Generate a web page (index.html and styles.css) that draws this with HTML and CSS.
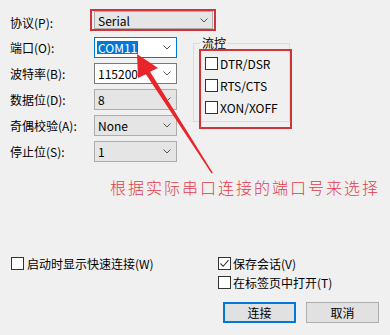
FILE: index.html
```html
<!DOCTYPE html>
<html lang="zh-CN">
<head>
<meta charset="utf-8">
<title>串口设置</title>
<link rel="stylesheet" href="styles.css">
</head>
<body>
<div class="dialog">
  <div class="proto">
    <span class="label proto-label">协议(P):</span>
    <div class="mark-box">
      <div class="combo combo-gray combo-serial"><span class="val">Serial</span><svg class="chev" viewBox="0 0 8 5" width="8" height="5"><polyline points="0.5,0.5 4,4 7.5,0.5"/></svg></div>
    </div>
  </div>
  <div class="main">
    <div class="fields">
      <div class="row"><span class="label">端口(O):</span><div class="combo combo-focus"><span class="val sel">COM11</span><svg class="chev" viewBox="0 0 8 5" width="8" height="5"><polyline points="0.5,0.5 4,4 7.5,0.5"/></svg></div></div>
      <div class="row"><span class="label">波特率(B):</span><div class="combo"><span class="val">115200</span><svg class="chev" viewBox="0 0 8 5" width="8" height="5"><polyline points="0.5,0.5 4,4 7.5,0.5"/></svg></div></div>
      <div class="row"><span class="label">数据位(D):</span><div class="combo combo-gray"><span class="val">8</span><svg class="chev" viewBox="0 0 8 5" width="8" height="5"><polyline points="0.5,0.5 4,4 7.5,0.5"/></svg></div></div>
      <div class="row"><span class="label">奇偶校验(A):</span><div class="combo combo-gray"><span class="val">None</span><svg class="chev" viewBox="0 0 8 5" width="8" height="5"><polyline points="0.5,0.5 4,4 7.5,0.5"/></svg></div></div>
      <div class="row"><span class="label">停止位(S):</span><div class="combo combo-gray"><span class="val">1</span><svg class="chev" viewBox="0 0 8 5" width="8" height="5"><polyline points="0.5,0.5 4,4 7.5,0.5"/></svg></div></div>
    </div>
    <div class="group-wrap">
      <fieldset class="group">
        <legend>流控</legend>
        <label class="check"><span class="box"></span>DTR/DSR</label>
        <label class="check"><span class="box"></span>RTS/CTS</label>
        <label class="check"><span class="box"></span>XON/XOFF</label>
      </fieldset>
      <div class="mark-group"></div>
    </div>
  </div>
  <div class="note">根据实际串口连接的端口号来选择</div>
  <div class="bottom">
    <div class="bottom-left">
      <label class="check check-wide"><span class="box"></span>启动时显示快速连接(W)</label>
    </div>
    <div class="bottom-right">
      <label class="check"><span class="box"><svg viewBox="0 0 11 11" width="11" height="11"><polyline points="1.5,5.5 4.2,8.3 9.5,2.2"/></svg></span>保存会话(V)</label>
      <label class="check"><span class="box"></span>在标签页中打开(T)</label>
      <div class="buttons">
        <button class="btn btn-primary" type="button">连接</button>
        <button class="btn" type="button">取消</button>
      </div>
    </div>
  </div>
</div>
<svg class="arrow" viewBox="0 0 390 335" width="390" height="335">
  <polygon points="137,54 158,68 150.1,71.7 212.8,172.8 211.6,173.4 145.9,74.3 138,78"/>
</svg>
</body>
</html>
```
FILE: styles.css
```css
* { box-sizing: border-box; }
html, body { margin: 0; padding: 0; }
body {
  width: 390px;
  height: 335px;
  overflow: hidden;
  position: relative;
  background: #f0f0f0;
  color: #000;
  font-family: "Noto Sans CJK SC", "Microsoft YaHei", sans-serif;
  font-size: 12px;
  line-height: 15px;
}
.dialog { padding: 9px 0 0 10px; }

.proto { display: flex; align-items: center; height: 22px; }
.label { flex: none; width: 84px; white-space: nowrap; }
.proto-label { width: 80px; padding-top: 4px; }
.mark-box {
  width: 126px;
  height: 22px;
  border: 2px solid #d13438;
  padding-left: 2px;
  display: flex;
  align-items: center;
}

.main { display: flex; align-items: flex-start; margin-top: 6px; }
.fields { display: flex; flex-direction: column; gap: 5px; }
.row { display: flex; align-items: center; }

.combo {
  width: 83px;
  height: 21px;
  background: #fff;
  border: 1px solid #7a7a7a;
  display: flex;
  align-items: center;
  justify-content: space-between;
  padding: 0 5px 0 2px;
}
.combo-gray { background: #e5e5e5; border-color: #adadad; }
.combo-focus { border-color: #0078d7; }
.combo-serial { width: 119px; height: 18px; padding-right: 4px; }
.val { padding-left: 1px; line-height: 13px; }
.sel { background: #0078d7; color: #fff; padding: 0 1px 0 1px; }
.chev { flex: none; }
.chev polyline { fill: none; stroke: #555; stroke-width: 1; }

.group-wrap { position: relative; margin: -1px 0 0 16px; }
.group {
  width: 97px;
  margin: 0;
  padding: 6px 0 6px 11px;
  border: 1px solid #dcdcdc;
  min-width: 0;
}
.group legend { padding: 0 2px; margin-left: -5px; line-height: 14px; }
.group .check + .check { margin-top: 7px; }
.mark-group {
  position: absolute;
  left: 6px;
  top: 13px;
  width: 93px;
  height: 80px;
  border: 2px solid #d13438;
  pointer-events: none;
}

.check {
  display: flex;
  align-items: center;
  gap: 2px;
  height: 15px;
  white-space: nowrap;
}
.check-wide { gap: 3px; }
.box {
  flex: none;
  width: 13px;
  height: 13px;
  background: #fff;
  border: 1px solid #333;
  display: flex;
  align-items: center;
  justify-content: center;
}
.box polyline { fill: none; stroke: #333; stroke-width: 1.1; }

.note {
  margin-top: 15px;
  padding-left: 100px;
  font-size: 16px;
  line-height: 20px;
  letter-spacing: 2px;
  font-weight: 300;
  color: #e23d4b;
}

.bottom { display: flex; margin-top: 59px; }
.bottom-left { width: 208px; padding-left: 1px; }
.bottom-right { display: flex; flex-direction: column; gap: 4px; }
.buttons { display: flex; gap: 10px; padding-left: 5px; margin-top: 8px; }
.btn {
  width: 73px;
  height: 21px;
  padding: 0;
  margin: 0;
  background: #e1e1e1;
  border: 1px solid #adadad;
  font: inherit;
  color: #000;
  line-height: 17px;
}
.btn-primary { border: 2px solid #0078d7; }

.arrow { position: absolute; left: 0; top: 0; pointer-events: none; }
.arrow polygon { fill: #e8252b; }
```
